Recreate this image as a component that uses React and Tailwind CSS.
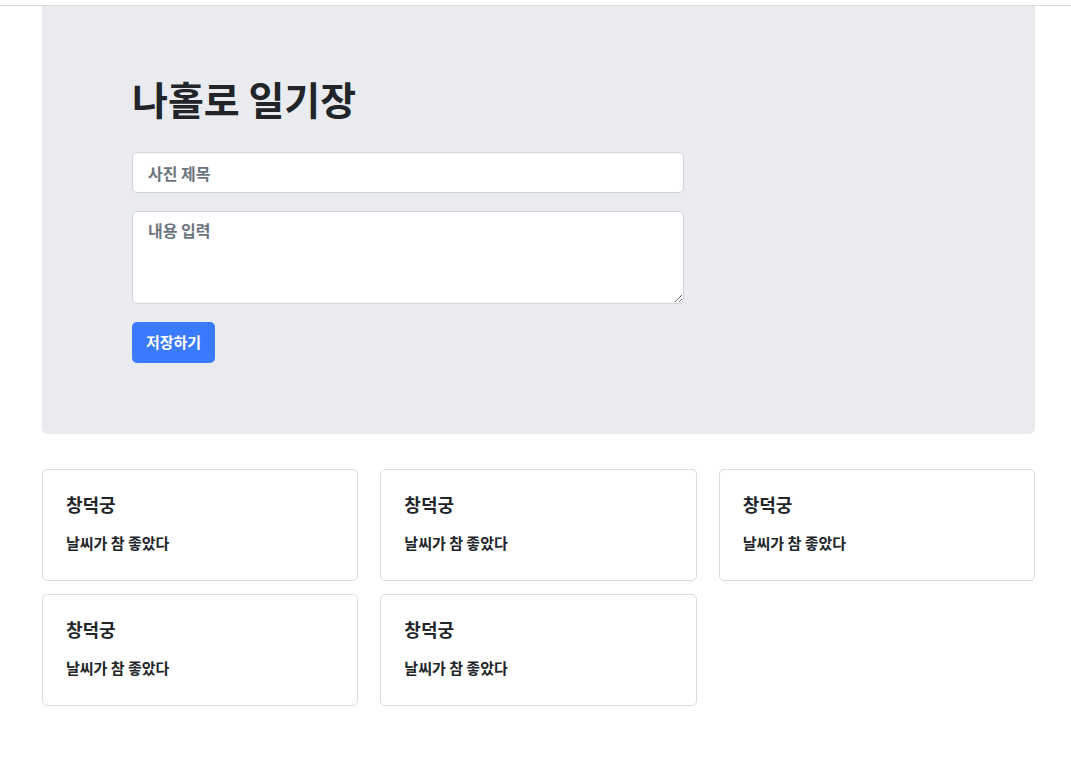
import { useState } from 'react';

const diaries = [
    { title: '창덕궁', content: '날씨가 참 좋았다' },
    { title: '창덕궁', content: '날씨가 참 좋았다' },
    { title: '창덕궁', content: '날씨가 참 좋았다' },
    { title: '창덕궁', content: '날씨가 참 좋았다' },
    { title: '창덕궁', content: '날씨가 참 좋았다' },
];

const App = () => {
    const [title, setTitle] = useState('');
    const [content, setContent] = useState('');

    return (
        <div className="min-h-screen bg-white text-[#212529]" style={{ fontFamily: '"Noto Sans CJK KR", "Noto Sans", sans-serif' }}>
            {/* top rule */}
            <div className="h-[6px] border-b border-[#d9d9d9]" />

            <div className="w-[993px] ml-[42px]">
                {/* Jumbotron */}
                <div className="bg-[#e9ebef] rounded-b-md pt-[68px] pb-[71px] px-[90px]">
                    <h1 className="text-[39px] leading-[48px] font-bold text-[#212529]">나홀로 일기장</h1>

                    <form className="mt-[30px] w-[552px] flex flex-col" onSubmit={(e) => e.preventDefault()}>
                        <input
                            type="text"
                            placeholder="사진 제목"
                            value={title}
                            onChange={(e) => setTitle(e.target.value)}
                            className="h-[41px] px-[15px] bg-white border border-[#ced4da] rounded-[5px] text-base font-bold placeholder:text-[#6c757d] outline-none"
                        />
                        <textarea
                            placeholder="내용 입력"
                            value={content}
                            onChange={(e) => setContent(e.target.value)}
                            className="mt-[18px] h-[93px] px-[15px] py-[6px] bg-white border border-[#ced4da] rounded-[5px] text-base font-bold placeholder:text-[#6c757d] outline-none"
                        />
                        <div className="mt-[18px]">
                            <button type="submit" className="h-[41px] w-[83px] bg-[#3a7bfd] text-white text-[15px] font-bold rounded-[5px]">
                                저장하기
                            </button>
                        </div>
                    </form>
                </div>

                {/* Diary cards */}
                <div className="mt-[35px] grid grid-cols-3 gap-x-[22px] gap-y-[13px]">
                    {diaries.map((d, i) => (
                        <div key={i} className="h-[112px] border border-[#dcdcdc] rounded-[5px] px-[23px] pt-[21px]">
                            <h5 className="text-[18px] leading-[26px] font-bold">{d.title}</h5>
                            <p className="mt-[16px] text-[15px] leading-[20px] font-bold">{d.content}</p>
                        </div>
                    ))}
                </div>
            </div>
        </div>
    );
};

export default App;
